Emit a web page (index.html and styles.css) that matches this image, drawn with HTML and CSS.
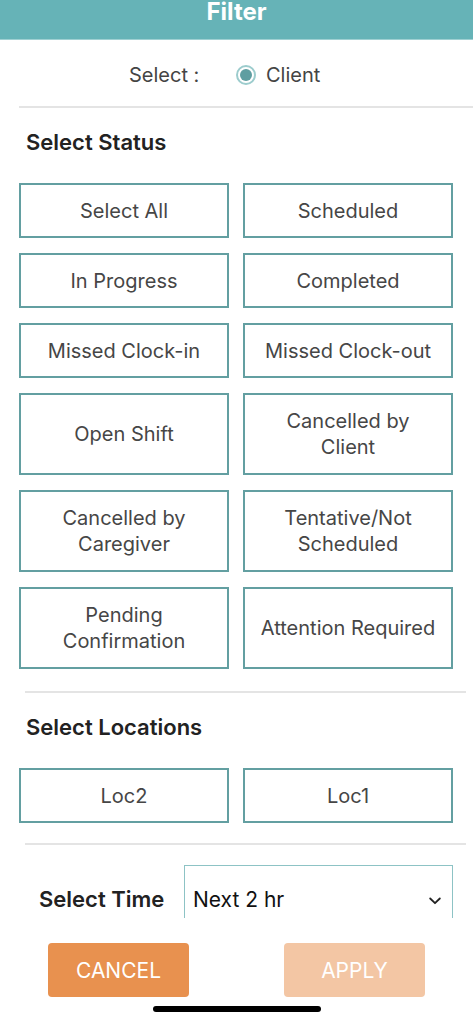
FILE: index.html
```html
<!DOCTYPE html>
<html lang="en">
<head>
<meta charset="utf-8">
<title>Filter</title>
<link rel="stylesheet" href="styles.css">
</head>
<body>
<div class="screen">
  <header class="header"><span class="title">Filter</span></header>
  <main class="content">
    <div class="select-row">
      <span class="select-label">Select :</span>
      <span class="radio"><span class="radio-dot"></span></span>
      <span class="radio-text">Client</span>
    </div>
    <div class="divider divider-first"></div>

    <h2 class="section-title">Select Status</h2>
    <div class="grid">
      <div class="chip">Select All</div>
      <div class="chip">Scheduled</div>
      <div class="chip">In Progress</div>
      <div class="chip">Completed</div>
      <div class="chip">Missed Clock-in</div>
      <div class="chip">Missed Clock-out</div>
      <div class="chip tall">Open Shift</div>
      <div class="chip tall">Cancelled by<br>Client</div>
      <div class="chip tall">Cancelled by<br>Caregiver</div>
      <div class="chip tall">Tentative/Not<br>Scheduled</div>
      <div class="chip tall">Pending<br>Confirmation</div>
      <div class="chip tall">Attention Required</div>
    </div>
    <div class="divider"></div>

    <h2 class="section-title">Select Locations</h2>
    <div class="grid">
      <div class="chip">Loc2</div>
      <div class="chip">Loc1</div>
    </div>
    <div class="divider divider-loc"></div>

    <div class="time-row">
      <span class="time-label">Select Time</span>
      <div class="dropdown">
        <span class="dropdown-text">Next 2 hr</span>
        <svg class="chevron" width="12" height="8" viewBox="0 0 12 8"><path d="M1.2 1.5 L6 6.2 L10.8 1.5" fill="none" stroke="#222" stroke-width="1.8" stroke-linecap="round" stroke-linejoin="round"/></svg>
      </div>
    </div>
  </main>
  <footer class="footer">
    <div class="actions">
      <button class="btn btn-cancel">CANCEL</button>
      <button class="btn btn-apply">APPLY</button>
    </div>
    <div class="home-bar"></div>
  </footer>
</div>
</body>
</html>
```
FILE: styles.css
```css
* { box-sizing: border-box; }
html, body { margin: 0; padding: 0; background: #fff; }
body {
  font-family: Inter, "Liberation Sans", Arial, sans-serif;
  color: #444;
}
.screen {
  width: 473px;
  height: 1024px;
  overflow: hidden;
  display: flex;
  flex-direction: column;
}
.header {
  height: 40px;
  flex: 0 0 40px;
  background: #66b3b7;
  border-bottom: 1px solid #9fd0d2;
  display: flex;
  justify-content: center;
  align-items: flex-start;
}
.title {
  color: #fff;
  font-weight: 700;
  font-size: 24px;
  line-height: 24px;
}
.content {
  height: 878px;
  flex: 0 0 878px;
  overflow: hidden;
}
.select-row {
  display: flex;
  align-items: center;
  height: 24px;
  margin-top: 23px;
  padding-left: 129px;
  font-size: 20px;
  color: #444;
}
.select-label { width: 107px; }
.radio {
  width: 20px;
  height: 20px;
  border-radius: 50%;
  border: 2px solid #9ccccd;
  display: flex;
  align-items: center;
  justify-content: center;
  margin-right: 10px;
}
.radio-dot {
  width: 12px;
  height: 12px;
  border-radius: 50%;
  background: #5f9ea1;
}
.divider {
  height: 2px;
  background: #e4e4e4;
  margin: 22px 7px 0 25px;
}
.divider-first {
  margin: 19px 0 0 19px;
}
.divider-loc { margin-top: 20px; }
.section-title {
  margin: 21px 0 0 26px;
  font-size: 22px;
  line-height: 26px;
  font-weight: 600;
  color: #222;
}
.grid {
  display: grid;
  grid-template-columns: 210px 210px;
  column-gap: 14px;
  row-gap: 15px;
  margin: 28px 0 0 19px;
}
.chip {
  height: 55px;
  border: 2px solid #639fa1;
  display: flex;
  align-items: center;
  justify-content: center;
  text-align: center;
  font-size: 20px;
  line-height: 26px;
  color: #464646;
}
.chip.tall { height: 82px; }
.time-row {
  display: flex;
  align-items: flex-start;
  margin-top: 20px;
}
.time-label {
  width: 184px;
  padding-left: 39px;
  padding-top: 21px;
  font-size: 22px;
  line-height: 26px;
  font-weight: 600;
  color: #222;
}
.dropdown {
  width: 269px;
  height: 70px;
  border: 1.5px solid #8dc3c5;
  display: flex;
  align-items: flex-start;
  justify-content: space-between;
  padding: 21px 11px 0 8px;
}
.dropdown-text {
  font-size: 21px;
  line-height: 26px;
  color: #111;
}
.chevron { margin-top: 10px; }
.footer {
  flex: 1 1 auto;
  background: #fff;
  padding-top: 25px;
}
.actions {
  display: flex;
  justify-content: space-between;
  padding: 0 48px;
}
.btn {
  width: 141px;
  height: 54px;
  border: none;
  border-radius: 4px;
  color: #fff;
  font-family: Inter, "Liberation Sans", Arial, sans-serif;
  font-size: 21px;
  font-weight: 400;
  padding: 0;
}
.btn-cancel { background: #e8914f; }
.btn-apply { background: #f3c6a4; }
.home-bar {
  width: 168px;
  height: 6px;
  border-radius: 3px;
  background: #000;
  margin: 9px auto 0;
}
```
